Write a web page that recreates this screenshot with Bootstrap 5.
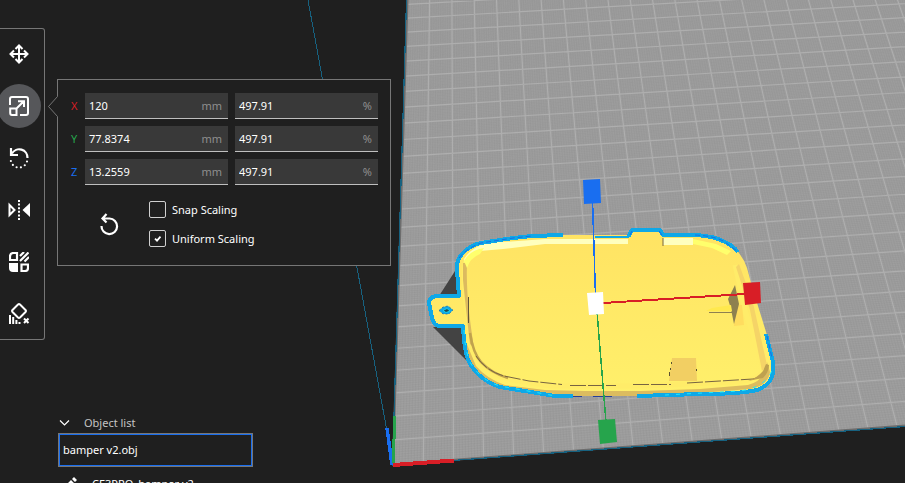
<!DOCTYPE html>
<html lang="en">
<head>
<meta charset="utf-8">
<meta name="viewport" content="width=device-width, initial-scale=1">
<title>Scale tool</title>
<link href="https://cdn.jsdelivr.net/npm/bootstrap@5.3.0/dist/css/bootstrap.min.css" rel="stylesheet">
<style>
  body { background: #1f1f1f; color: #fff; font: 11px/16px "Noto Sans", sans-serif; }
  .scene { z-index: -1; }
  .top-area { padding-top: 28px; }
  .toolbar { width: 45px; padding: 3px 0; border: 1px solid #767676; border-left: 0; border-radius: 0 3px 3px 0; gap: 8px; background: #1f1f1f; }
  .tool { width: 44px; height: 44px; margin-left: -3px; border: 0; border-radius: 50%; background: transparent; color: #fff; }
  .tool.active { background: #56575a; }
  .tool-panel { width: 334px; margin: 51px 0 0 12px; padding: 13px 12px 18px 13px; border: 1px solid #767676; background: #1f1f1f; }
  .panel-tip { left: -10px; top: 16px; }
  .axis-rows { gap: 7px; }
  .axis-row { gap: 7px; }
  .axis-name { width: 7px; }
  .axis-x { color: #d81e26; } .axis-y { color: #26a44c; } .axis-z { color: #196ef0; }
  .field { flex: 1 1 0; min-width: 0; height: 26px; background: #393939; border-bottom: 1px solid #bfbfbf; }
  .field input { width: 100%; min-width: 0; border: 0; outline: 0; background: transparent; color: #fff; padding: 0 0 0 4px; }
  .unit { color: #8f8f8f; padding-right: 6px; }
  .options { margin-top: 16px; }
  .reset { width: 24px; height: 24px; margin-left: 26px; }
  .checks { margin-left: 28px; gap: 12px; }
  .check-line { gap: 6px; height: 17px; }
  .tick { appearance: none; width: 17px; height: 17px; margin: 0; border: 1px solid #d0d0d0; border-radius: 2px; background: #1f1f1f; }
  .tick:checked { background: #1f1f1f url("data:image/svg+xml,%3Csvg xmlns='http://www.w3.org/2000/svg' viewBox='0 0 15 15'%3E%3Cpath d='M5 7.6l2 2 3.5-4' fill='none' stroke='white' stroke-width='1.8'/%3E%3C/svg%3E") center / 15px; }
  .objects { width: 195px; margin-left: 58px; margin-bottom: -18px; }
  .list-toggle { height: 20px; gap: 14px; color: #c4c4c4; }
  .object-item { height: 34px; padding: 0 4px; border: 1px solid #767676; box-shadow: inset 0 0 0 1px #196ef0; background: #1f1f1f; color: #fff; }
  .job-row { height: 34px; padding-left: 6px; gap: 14px; color: #fff; }
</style>
<script src="https://cdn.jsdelivr.net/npm/bootstrap@5.3.0/dist/js/bootstrap.bundle.min.js"></script>
</head>
<body class="vh-100 overflow-hidden position-relative d-flex flex-column">

<svg class="scene position-absolute top-0 start-0 w-100 h-100" viewBox="0 0 905 483" preserveAspectRatio="xMinYMin slice" aria-label="Build plate with model">
  <defs>
    <linearGradient id="top" x1="0" y1="0" x2="0" y2="1"><stop offset="0" stop-color="#ffe363"/><stop offset="1" stop-color="#fff06b"/></linearGradient>
  </defs>
  <path d="M308 0L393 464" stroke="#17617f" fill="none" shape-rendering="crispEdges"/>
  <path d="M407.500 0L393 464.500L905 425.500V0z" fill="#9f9f9f"/>
  <path id="minor" fill="none" stroke="#868686" stroke-width=".6" opacity=".28"/>
  <path id="major" fill="none" stroke="#aeaeae" stroke-width="1.200"/>
  <path d="M407.500 0L393 464.500L905 425.500" stroke="#6d6d6d" stroke-width="2" fill="none"/>
  <path d="M406.500 0L392.500 465L905 426.500" stroke="#17617f" stroke-width="1.200" fill="none" shape-rendering="crispEdges"/>
  <g shape-rendering="crispEdges" fill="none" stroke-width="3.500">
    <path d="M387 428L392 465" stroke="#196ef0"/>
    <path d="M394.500 416L393.500 463" stroke="#26a44c" stroke-width="3"/>
    <path d="M393 465L454 460.500" stroke="#d81e26" stroke-width="4"/>
  </g>
  <path d="M455 271L439 296H460zM433 327H464L468 362z" fill="#434343"/>
  <path fill="url(#top)" d="M457 270Q456 261 462 254Q470 245 481 242L513 238L532 236L563 235L629 235L632 230H660L663 235H695Q715 236 725 242Q741 250 747 268L753 290L767 335L773 360V373Q771 385 757 390Q740 394 700 394L637 396H573L537 393L500 387Q478 380 468 360Q464 348 463 326H440Q434 326 432 318L429 303Q429 296 438 296H459z"/>
  <path d="M476 366Q487 379 505 385L545 390L585 391H640L700 389L748 385Q766 380 767 362L770 372Q768 386 750 389L700 393L637 396H573L537 392L500 386Q480 379 468 360L466 342z" fill="#dcbc5f"/>
  <path d="M466 258C462 280 466 305 470 335C474 362 490 375 512 380L550 386L586 386H640L735 382Q758 380 764 370L745 310L735 265" fill="none" stroke="#ffec69" stroke-width="5"/>
  <path d="M463 263L467 263C466 290 469 315 474 348L470 344Q466 310 463 280z" fill="#dcba5f"/>
  <path d="M470 333Q473 353 481 362Q491 373 508 378" fill="none" stroke="#c0a34d" stroke-width="2.500"/>
  <path d="M468.500 297V323" stroke="#62563a" fill="none"/>
  <path d="M476 356Q486 371 504 376L529 381L562 384.500M570 385.500H616M633 384.500H671M687 383L753 379Q762 377 766 369" stroke="#776441" fill="none" stroke-dasharray="16 2"/>
  <path d="M464 259Q471 247 490 242H503L545 239H628V244H545L503 249L480 251Q471 253 465 263zM663 238H693V245H663z" fill="#ffffbe"/>
  <path d="M464 261Q470 250 484 248L480 254Q470 258 467 268zM693 239L716 244L731 251L727 255L712 248L693 244z" fill="#ffff6c"/>
  <path d="M739 264L753 303L767 365L762 371L750 310L736 267z" fill="#f5d467"/>
  <path d="M766 364L763 371Q757 378 748 381L763 378Q769 372 769 365z" fill="#bfa14f"/>
  <path d="M663 238V246" stroke="#776441" stroke-width="1"/>
  <g fill="none" stroke="#0fa8e7" stroke-width="4" stroke-linejoin="round" shape-rendering="crispEdges">
    <path d="M563 235L532 236L513 238L481 243Q470 245 462 254Q456 261 457 270L459 296H438Q429 296 429 303L432 318Q434 326 440 326H463Q464 348 468 360Q478 380 500 387L537 393L555 396H573"/>
    <path d="M595 236.500H629" stroke-width="2"/>
    <path d="M627 235.500H629L632 230H660L663 235H695Q715 236 725 242Q732 245 738 252"/>
    <path d="M766 334L770 350L773 362V373Q771 385 757 390Q740 394 700 394L637 396"/>
  </g>
  <path d="M459 258Q467 248 481 243L513 238L532 236M630 235L632 231M659 231L662 235M695 235Q715 236 725 242L737 251M767 336L772 358" stroke="#176be8" stroke-width="1" stroke-dasharray="5 3" fill="none"/>
  <path d="M464 330Q465 350 470 362Q480 380 500 386L556 396M665 395L740 391Q766 387 772 370" stroke="#19ecff" stroke-width="1" stroke-dasharray="4 7" fill="none"/>
  <path d="M573 396.500H582M593 396.500H612" stroke="#25409a" fill="none"/>
  <path d="M439 310.500L443 307L448 306L453 310L449 314L443 314z" fill="#0fa8e7" stroke="#17609f" stroke-width=".7" stroke-dasharray="2 2"/>
  <path d="M443 310.500L447 308.500L450 311L446 312.500z" fill="#1c4b57" stroke="#19ecff" stroke-width=".7"/>
  <path d="M672 358H696L697 381H669z" fill="#f2cf63"/>
  <path d="M671.500 362V364M670.500 368V370M669.500 372V376M696.500 369V371" stroke="#5d5232"/>
  <path d="M733 305L742 305L744 325L734 326z" fill="#ffdc5f"/>
  <path d="M735 285L739 304L734 324L731 309L728 299z" fill="#8e804f"/>
  <path d="M706 311L712 308L731 305L732 311z" fill="#ffe94e"/>
  <path d="M709 312.500H732" stroke="#8e804f"/>
  <g shape-rendering="crispEdges" fill="none">
    <path d="M592.500 200L595.500 296" stroke="#196ef0" stroke-width="1.500"/>
    <path d="M597 312L606 422" stroke="#26a44c" stroke-width="1.500"/>
    <path d="M603 303L745 294" stroke="#d81e26" stroke-width="2"/>
  </g>
  <path d="M583 180L600 179L601 203L584 204z" fill="#196ef0"/>
  <path d="M587 293L603 292L604 314L589 315z" fill="#fff"/>
  <path d="M743 283L760 282L761 303L745 305z" fill="#d81e26"/>
  <path d="M598 420L615 419L617 442L600 444z" fill="#26a44c"/>
</svg>

<main class="top-area d-flex align-items-start">
  <nav class="toolbar d-flex flex-column flex-shrink-0" aria-label="Tools">
    <button class="tool d-flex align-items-center justify-content-center p-0" type="button" aria-label="Move">
      <svg width="20" height="20" fill="none" stroke="currentColor" stroke-width="2"><path d="M10 2v16M2 10h16M6.500 5L10 1.500L13.500 5M6.500 15l3.500 3.500L13.500 15M5 6.500L1.500 10L5 13.500M15 6.500l3.500 3.500L15 13.500"/></svg>
    </button>
    <button class="tool active d-flex align-items-center justify-content-center p-0" type="button" aria-label="Scale">
      <svg width="20" height="20" fill="none" stroke="currentColor" stroke-width="2"><path d="M1 9V3q0-2 2-2h14q2 0 2 2v14q0 2-2 2h-6M1.200 12.500h6.300V19H3q-1.800 0-1.800-2zM7.500 12.500l7-7M9 5.200h6V11"/></svg>
    </button>
    <button class="tool d-flex align-items-center justify-content-center p-0" type="button" aria-label="Rotate">
      <svg width="20" height="22" fill="none" stroke="currentColor" stroke-width="2.200"><path d="M3 6.500A8.300 8.300 0 0 1 18.500 11M2 1v7h7"/><path d="M18 14.500A8.300 8.300 0 0 1 1.800 11" stroke-width="2.200" stroke-linecap="round" stroke-dasharray="0 4.400"/></svg>
    </button>
    <button class="tool d-flex align-items-center justify-content-center p-0" type="button" aria-label="Mirror">
      <svg width="22" height="20" fill="none" stroke="currentColor" stroke-width="2"><path d="M1.500 5v10l5-5z"/><path d="M22 3v14l-7.500-7z" fill="currentColor" stroke="none"/><path d="M11 0v20" stroke-dasharray="2 1.600"/></svg>
    </button>
    <button class="tool d-flex align-items-center justify-content-center p-0" type="button" aria-label="Per model settings">
      <svg width="20" height="20" fill="none" stroke="currentColor" stroke-width="2.200"><path d="M8 8V1H4.500Q1 1 1 4.500V8zM12.500 12.500H19V16q0 3-3 3h-3.500z"/><path d="M0 11h9v9H4q-4 0-4-4z" fill="currentColor" stroke="none"/><path d="M11 4l4-4M11 9l8.500-8.500M15.500 9.500L20 5"/></svg>
    </button>
    <button class="tool d-flex align-items-center justify-content-center p-0" type="button" aria-label="Support blocker">
      <svg width="22" height="22" fill="none" stroke="currentColor" stroke-width="2"><path d="M10 1.500q1-.9 2 0l5.500 5.500q.9 1 0 2L12 14.500q-1 .9-2 0L4.500 9q-.9-1 0-2zM2 12v9M5.200 14v7M8.400 17v4M11.500 19v2M16 15.500l4.500 4.500M20.500 15.500L16 20"/></svg>
    </button>
  </nav>

  <section class="tool-panel position-relative flex-shrink-0" aria-label="Scale">
    <svg class="panel-tip position-absolute" width="10" height="22"><path d="M10 0L1 10.500L10 21z" fill="#1f1f1f"/><path d="M9.500 .5L.5 10.500L9.500 20.500" fill="none" stroke="#767676"/></svg>
    <div class="axis-rows d-flex flex-column">
      <div class="axis-row d-flex align-items-center">
        <label class="axis-name axis-x" for="x-size">X</label>
        <div class="field d-flex align-items-center"><input id="x-size" value="120"><span class="unit">mm</span></div>
        <div class="field d-flex align-items-center"><input aria-label="X percent" value="497.91"><span class="unit">%</span></div>
      </div>
      <div class="axis-row d-flex align-items-center">
        <label class="axis-name axis-y" for="y-size">Y</label>
        <div class="field d-flex align-items-center"><input id="y-size" value="77.8374"><span class="unit">mm</span></div>
        <div class="field d-flex align-items-center"><input aria-label="Y percent" value="497.91"><span class="unit">%</span></div>
      </div>
      <div class="axis-row d-flex align-items-center">
        <label class="axis-name axis-z" for="z-size">Z</label>
        <div class="field d-flex align-items-center"><input id="z-size" value="13.2559"><span class="unit">mm</span></div>
        <div class="field d-flex align-items-center"><input aria-label="Z percent" value="497.91"><span class="unit">%</span></div>
      </div>
    </div>
    <div class="options d-flex align-items-center">
      <button class="reset border-0 bg-transparent p-0 text-white" type="button" aria-label="Reset">
        <svg class="d-block" width="24" height="24" fill="none" stroke="currentColor" stroke-width="2.200"><path d="M4.500 14A7.800 7.800 0 1 0 12.500 6.500H6M9.500 2L5.500 6.500l4 4"/></svg>
      </button>
      <div class="checks d-flex flex-column">
        <div class="check-line d-flex align-items-center"><input class="tick" type="checkbox" id="snap"><label for="snap">Snap Scaling</label></div>
        <div class="check-line d-flex align-items-center"><input class="tick" type="checkbox" id="uniform" checked><label for="uniform">Uniform Scaling</label></div>
      </div>
    </div>
  </section>
</main>

<section class="objects mt-auto flex-shrink-0">
  <button class="list-toggle d-flex align-items-center border-0 bg-transparent p-0" type="button" aria-expanded="true">
    <svg width="12" height="8" fill="none" stroke="#fff" stroke-width="1.200"><path d="M2 1.500l4.500 4.500L11 1.500"/></svg>
    Object list
  </button>
  <button class="object-item d-flex align-items-center w-100" type="button">bamper v2.obj</button>
  <div class="job-row d-flex align-items-center">
    <svg width="14" height="14" fill="#fff"><path d="M8 2l2-2 3 3-2 2zM7 3l3 3-7 7H0v-3z"/></svg>
    <span>CE3PRO_bamper v2</span>
  </div>
</section>

<script>
  // Projects plate cells (column i, row j) to the camera view.
  function project(i, j) {
    const w = 1 + 0.001366 * i + 0.01408 * j;
    return ((393 + 30.872 * i + 6.3 * j) / w).toFixed(2) + ' ' + ((464.5 - 1.683 * i - 18.347 * j) / w).toFixed(2);
  }
  function gridPath(step, columns, rows) {
    let d = '';
    for (let n = step; n < columns; n += step) d += 'M' + project(n, 0) + 'L' + project(n, rows);
    for (let n = step; n < rows; n += step) d += 'M' + project(0, n) + 'L' + project(columns, n);
    return d;
  }
  document.getElementById('major').setAttribute('d', gridPath(1, 34, 30));
  document.getElementById('minor').setAttribute('d', gridPath(0.1, 34, 30));
</script>
</body>
</html>
